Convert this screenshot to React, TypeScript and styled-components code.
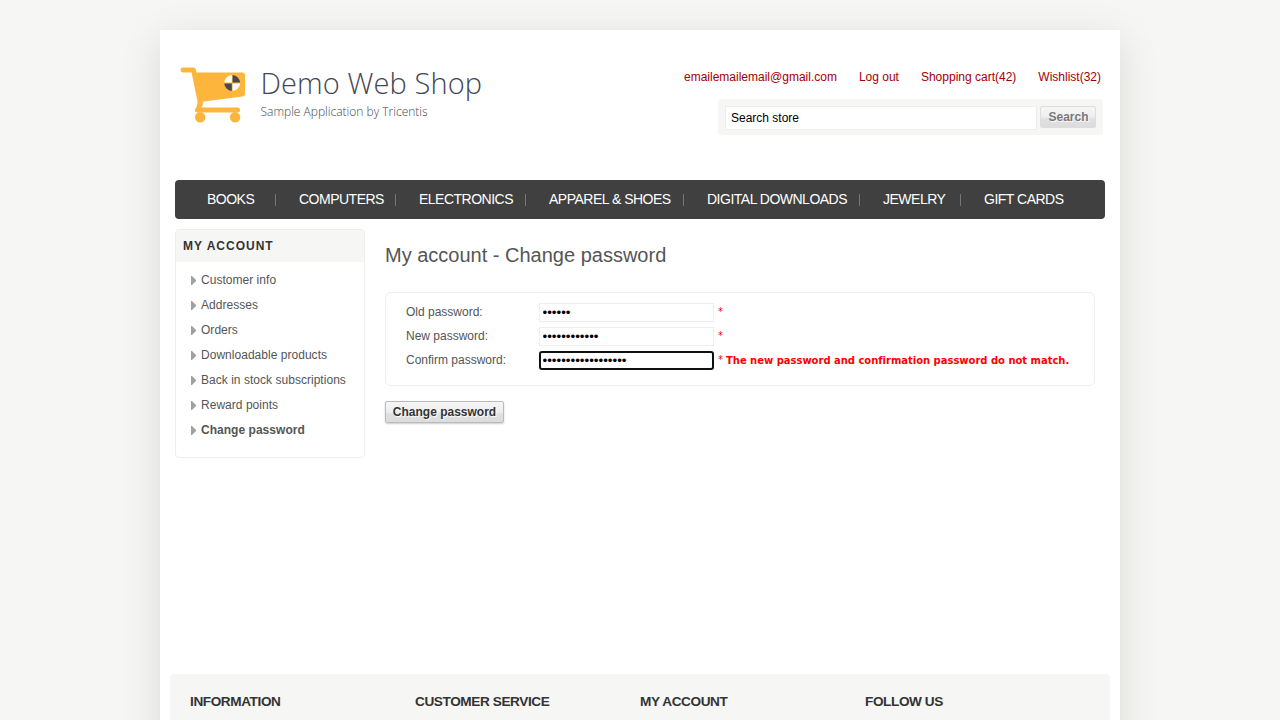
import React from "react";
import styled, { createGlobalStyle } from "styled-components";

const Global = createGlobalStyle`
  * { box-sizing: border-box; margin: 0; padding: 0; }
  html, body { height: 100%; }
  body {
    background: #f6f6f4;
    font-family: "Liberation Sans", Arial, sans-serif;
    font-size: 12px;
    color: #555;
    overflow: hidden;
  }
  a { color: inherit; text-decoration: none; }
  ul { list-style: none; }
`;

const Viewport = styled.div`
  height: 720px;
  overflow: hidden;
  padding-top: 30px;
`;

const Page = styled.div`
  width: 960px;
  height: 1000px;
  margin: 0 auto;
  background: #fff;
  box-shadow: 0 10px 36px #d9d9d8;
`;

const Header = styled.header`
  height: 150px;
  padding: 35px 17px 0 20px;
  display: flex;
  justify-content: space-between;
`;

const Logo = styled.a`
  display: flex;
  height: 62px;
`;

const LogoText = styled.span`
  display: flex;
  flex-direction: column;
  margin-left: 12.5px;
  font-family: "Open Sans", sans-serif;
  font-weight: 300;
  color: #444752;
  white-space: nowrap;
`;

const LogoTitle = styled.span`
  font-size: 29px;
  line-height: 36px;
  letter-spacing: 0.1px;
`;

const LogoTagline = styled.span`
  margin-top: 1px;
  font-size: 12px;
  line-height: 20px;
`;

const HeaderSide = styled.div`
  display: flex;
  flex-direction: column;
  align-items: flex-end;
`;

const UserLinks = styled.nav`
  display: flex;
  gap: 22px;
  margin: 5px 2px 15px 0;
  line-height: 14px;
  color: #a30000;
`;

const SearchBox = styled.form`
  display: flex;
  width: 385px;
  height: 36px;
  padding: 7px;
  gap: 3px;
  border-radius: 3px;
  background: #f6f6f4;
`;

const SearchInput = styled.input`
  width: 312px;
  height: 24px;
  padding: 0 5px;
  border: 1px solid #eee;
  font: 12px "Liberation Sans", Arial, sans-serif;
  color: #000;
  background: #fff;
  outline: none;
`;

const Button = styled.button<{ $primary?: boolean }>`
  height: 22px;
  width: ${(p) => (p.$primary ? "119px" : "56px")};
  padding-left: ${(p) => (p.$primary ? "0" : "1px")};
  border: 1px solid ${(p) => (p.$primary ? "#bbb" : "#ddd")};
  border-radius: 2px;
  background: linear-gradient(#f6f6f6 0%, #eee 50%, #e0e0e0 60%, #dcdcdc 100%);
  box-shadow: ${(p) => (p.$primary ? "0 1px 2px #ccc" : "none")};
  font: bold 12px "Liberation Sans", Arial, sans-serif;
  color: ${(p) => (p.$primary ? "#333" : "#777")};
  text-shadow: 1px 1px 1px #fff;
  white-space: nowrap;
`;

const Menu = styled.ul`
  display: flex;
  align-items: center;
  width: 930px;
  height: 39px;
  margin: 0 15px;
  padding-left: 32px;
  border-radius: 4px;
  background: #404040;
`;

const MenuItem = styled.li<{ $width: number }>`
  display: flex;
  justify-content: space-between;
  align-items: center;
  width: ${(p) => p.$width}px;
  padding-right: 23px;
  font-size: 14px;
  line-height: 18px;
  letter-spacing: -0.5px;
  color: #fff;
  white-space: nowrap;

  a { display: block; padding-bottom: 2px; }
`;

const Separator = styled.span`
  width: 1px;
  height: 12px;
  background: #777;
`;

const Main = styled.main`
  display: flex;
  gap: 20px;
  height: 455px;
  padding: 10px 25px 0 15px;
`;

const Sidebar = styled.aside`
  width: 190px;
  height: 229px;
  border: 1px solid #eee;
  border-radius: 4px;
  overflow: hidden;
`;

const SidebarTitle = styled.h3`
  height: 32px;
  padding-left: 7px;
  background: #f6f6f4;
  font-size: 12px;
  line-height: 33px;
  letter-spacing: 1px;
  color: #333;
`;

const SidebarList = styled.ul`
  padding: 5px 0 0 15px;
`;

const SidebarItem = styled.li<{ $active?: boolean }>`
  display: flex;
  align-items: center;
  gap: 5px;
  height: 25px;
  font-weight: ${(p) => (p.$active ? "bold" : "normal")};
  letter-spacing: 0.03px;
  white-space: nowrap;

  svg { margin-top: 1px; }
`;

const Content = styled.section`
  width: 710px;
`;

const Title = styled.h1`
  margin-top: 13px;
  font-size: 20px;
  font-weight: normal;
  line-height: 26px;
`;

const Fields = styled.div`
  height: 94px;
  margin: 24px 0 15px;
  padding: 7px 20px;
  border: 1px solid #eee;
  border-radius: 6px;
`;

const Row = styled.div`
  display: flex;
  align-items: center;
  height: 24px;
  white-space: nowrap;
`;

const Label = styled.label`
  flex: none;
  width: 133px;
`;

const PasswordInput = styled.input<{ $focused?: boolean }>`
  flex: none;
  width: 175px;
  height: 19px;
  padding: 0 ${(p) => (p.$focused ? 1.5 : 2.5)}px;
  border: ${(p) => (p.$focused ? "2px solid #101010" : "1px solid #eee")};
  border-radius: ${(p) => (p.$focused ? "3px" : "0")};
  font: 13.333px "Liberation Sans", Arial, sans-serif;
  color: #000;
  outline: none;
`;

const Required = styled.span`
  width: 5px;
  margin: -2px 3px 0 4px;
  font-family: "DejaVu Sans", Verdana, sans-serif;
  font-size: 10px;
  color: #f00;
`;

const ErrorText = styled.span`
  font: bold 10px "DejaVu Sans", Verdana, sans-serif;
  letter-spacing: -0.02px;
  color: #f00;
`;

const Footer = styled.footer`
  display: flex;
  height: 300px;
  margin: 0 10px;
  padding: 19px 20px;
  border-radius: 4px 4px 0 0;
  background: #f6f6f4;
`;

const FooterTitle = styled.h3`
  width: 225px;
  font-size: 13.6px;
  line-height: 18px;
  letter-spacing: -0.4px;
  color: #333;
`;

const Cart = () => (
  <svg width="68" height="62" viewBox="0 0 68 62">
    <g fill="none" stroke="#fdb53c" strokeLinecap="round" strokeLinejoin="round">
      <path d="M2.9 5H13.5L20.5 39" strokeWidth="4.8" />
      <path d="M17.5 45H57.5" strokeWidth="5" />
      <path d="M20 38.5L18.5 44" strokeWidth="5" />
    </g>
    <path
      d="M14 7.5H62.3Q65 7.5 65 10.2V28.5Q65 31.2 62.3 31.6L20 37Z"
      fill="#fdb53c"
    />
    <circle cx="20.2" cy="52.3" r="5.2" fill="#fdb53c" />
    <circle cx="55.1" cy="52.3" r="5.2" fill="#fdb53c" />
    <path
      d="M51.8 17.6V10.1A7.9 7.9 0 0 0 44.3 17.6ZM52.6 18.4V25.9A7.9 7.9 0 0 0 60.1 18.4Z"
      fill="#fff"
    />
    <path
      d="M52.6 17.6V10.1A7.9 7.9 0 0 1 60.1 17.6ZM51.8 18.4V25.9A7.9 7.9 0 0 1 44.3 18.4Z"
      fill="#454955"
    />
  </svg>
);

const Arrow = () => (
  <svg width="5" height="9" viewBox="0 0 5 9">
    <path d="M0 0H1L5 4V5L1 9H0Z" fill="#a0a0a0" />
  </svg>
);

const menu = [
  { text: "BOOKS", width: 92 },
  { text: "COMPUTERS", width: 120 },
  { text: "ELECTRONICS", width: 130 },
  { text: "APPAREL & SHOES", width: 158 },
  { text: "DIGITAL DOWNLOADS", width: 176 },
  { text: "JEWELRY", width: 101 },
  { text: "GIFT CARDS", width: 110 },
];

const accountLinks = [
  "Customer info",
  "Addresses",
  "Orders",
  "Downloadable products",
  "Back in stock subscriptions",
  "Reward points",
  "Change password",
];

const fields = [
  { label: "Old password:", value: "secret" },
  { label: "New password:", value: "secretsecret" },
  {
    label: "Confirm password:",
    value: "secretsecretsecret",
    error: "The new password and confirmation password do not match.",
  },
];

export default function App() {
  return (
    <Viewport>
      <Global />
      <Page>
        <Header>
          <Logo href="#">
            <Cart />
            <LogoText>
              <LogoTitle>Demo Web Shop</LogoTitle>
              <LogoTagline>Sample Application by Tricentis</LogoTagline>
            </LogoText>
          </Logo>
          <HeaderSide>
            <UserLinks>
              <a href="#">emailemailemail@gmail.com</a>
              <a href="#">Log out</a>
              <a href="#">Shopping cart(42)</a>
              <a href="#">Wishlist(32)</a>
            </UserLinks>
            <SearchBox>
              <SearchInput defaultValue="Search store" />
              <Button type="button">Search</Button>
            </SearchBox>
          </HeaderSide>
        </Header>
        <Menu>
          {menu.map((item, i) => (
            <MenuItem key={item.text} $width={item.width}>
              <a href="#">{item.text}</a>
              {i < menu.length - 1 && <Separator />}
            </MenuItem>
          ))}
        </Menu>
        <Main>
          <Sidebar>
            <SidebarTitle>MY ACCOUNT</SidebarTitle>
            <SidebarList>
              {accountLinks.map((text) => (
                <SidebarItem key={text} $active={text === "Change password"}>
                  <Arrow />
                  <a href="#">{text}</a>
                </SidebarItem>
              ))}
            </SidebarList>
          </Sidebar>
          <Content>
            <Title>My account - Change password</Title>
            <Fields>
              {fields.map((f) => (
                <Row key={f.label}>
                  <Label>{f.label}</Label>
                  <PasswordInput type="password" defaultValue={f.value} $focused={!!f.error} />
                  <Required>*</Required>
                  {f.error && <ErrorText>{f.error}</ErrorText>}
                </Row>
              ))}
            </Fields>
            <Button type="button" $primary>
              Change password
            </Button>
          </Content>
        </Main>
        <Footer>
          {["INFORMATION", "CUSTOMER SERVICE", "MY ACCOUNT", "FOLLOW US"].map((text) => (
            <FooterTitle key={text}>{text}</FooterTitle>
          ))}
        </Footer>
      </Page>
    </Viewport>
  );
}
